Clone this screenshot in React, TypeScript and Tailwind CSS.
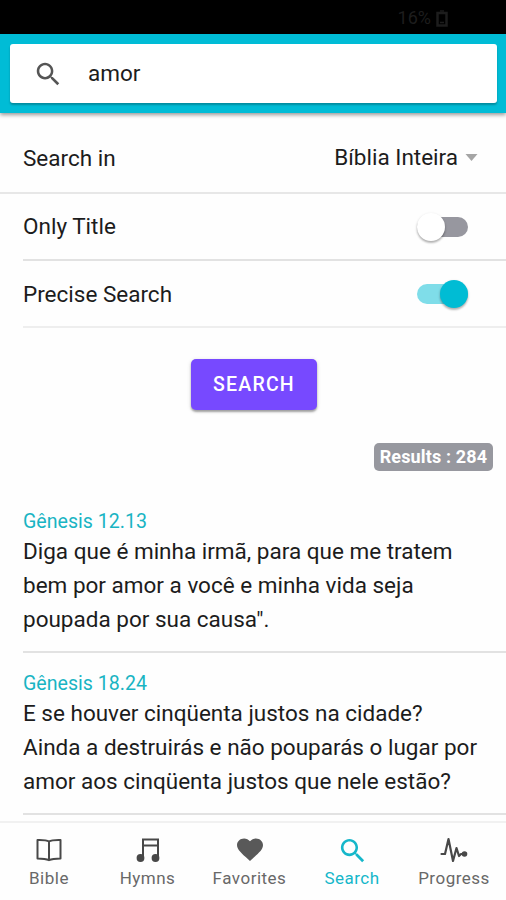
import type { ReactNode } from "react";

function Magnifier({ className }: { className: string }) {
  return (
    <svg viewBox="0 0 512 512" className={className} fill="currentColor">
      <path d="M337.509 305.372h-17.501l-6.571-5.486c20.791-25.232 33.922-57.054 33.922-93.257C347.358 127.632 283.896 64 205.135 64 127.452 64 64 127.632 64 206.629s63.452 142.628 142.225 142.628c35.011 0 67.831-13.167 92.991-34.008l6.561 5.487v17.551L415.18 448 448 415.086 337.509 305.372zm-131.284 0c-54.702 0-98.463-43.887-98.463-98.743 0-54.858 43.761-98.742 98.463-98.742 54.7 0 98.462 43.884 98.462 98.742 0 54.856-43.762 98.743-98.462 98.743z" />
    </svg>
  );
}

function Toggle({ on = false }: { on?: boolean }) {
  return (
    <div className={`relative h-[20px] w-[51px] rounded-full ${on ? "bg-[#7fdde9]" : "bg-[#97979f]"}`}>
      <div
        className={`absolute -top-[4px] size-[28px] rounded-full shadow-[0_2px_2px_rgba(0,0,0,0.22),0_1px_3px_rgba(0,0,0,0.15)] ${
          on ? "right-0 bg-[#00bcd4]" : "left-0 bg-white"
        }`}
      />
    </div>
  );
}

function Verse({ title, lines, className }: { title: string; lines: string[]; className: string }) {
  return (
    <article className={`ml-[23px] border-b-2 border-[#e2e2e2] ${className}`}>
      <h2 className="text-[19.6px] leading-[27px] text-[#19b4c3]">{title}</h2>
      <p className="text-[22.5px] leading-[33.75px] whitespace-nowrap">
        {lines.map((line) => (
          <span key={line} className="block">{line}</span>
        ))}
      </p>
    </article>
  );
}

function Tab({ label, className, children }: { label: string; className: string; children: ReactNode }) {
  return (
    <div className={`flex flex-col items-center pt-[11px] ${className}`}>
      <div className="flex h-[32px] items-center justify-center">{children}</div>
      <span className="text-[17px] leading-[24px] tracking-[0.5px]">{label}</span>
    </div>
  );
}

export default function App() {
  return (
    <div className="flex h-[900px] w-[506px] flex-col overflow-hidden bg-[#fefefe] font-[Roboto,sans-serif] text-[#1c1c1c]">
      <div className="flex h-[34px] shrink-0 items-center justify-end gap-[5px] bg-black pt-[2px] pr-[58px] text-[#1d1d1d]">
        <span className="text-[18px] leading-[20px]">16%</span>
        <svg viewBox="0 0 12 17" className="h-[17px] w-[12px]" fill="none" stroke="currentColor">
          <path d="M1.500 3h9v12.500h-9z" strokeWidth="2.500" />
          <path d="M4 1h4M4 12.500h4" strokeWidth="1.500" />
        </svg>
      </div>
      <header className="z-10 h-[79px] shrink-0 bg-[#00bcd6] px-[10px] pt-[10px] shadow-[0_2px_4px_rgba(0,0,0,0.4)]">
        <div className="flex h-[59px] w-[487px] items-center rounded-[3px] bg-white pl-[23px] shadow-[0_2px_2px_rgba(0,0,0,0.25)]">
          <Magnifier className="size-[30px] text-[#555]" />
          <span className="ml-[25px] pb-[2px] text-[22.5px] leading-[30px]">amor</span>
        </div>
      </header>
      <main className="min-h-0 flex-1 overflow-hidden text-[22.5px]">
        <div className="flex h-[81px] items-center justify-between border-b-2 border-[#e7e7e7] pt-[12px] pr-[28px] pl-[23px]">
          <span>Search in</span>
          <div className="flex items-center gap-[7px] pb-[2px]">
            <span>Bíblia Inteira</span>
            <svg viewBox="0 0 12 7" className="h-[7px] w-[13px]" fill="#a5a5a5"><path d="M0 0h12L6 7z" /></svg>
          </div>
        </div>
        <div className="ml-[23px] flex h-[67px] items-center justify-between border-b-2 border-[#e2e2e2] pr-[38px]">
          <span className="pt-px">Only Title</span>
          <Toggle />
        </div>
        <div className="ml-[23px] flex h-[67px] items-center justify-between border-b-2 border-[#eee] pr-[38px]">
          <span className="pt-[2px]">Precise Search</span>
          <Toggle on />
        </div>
        <button className="mt-[31px] ml-[191px] block h-[51px] w-[126px] rounded-[5px] bg-[#7749ff] text-[19.500px] font-medium tracking-[1.2px] text-white shadow-[0_2px_2px_rgba(0,0,0,0.3),0_1px_4px_rgba(0,0,0,0.15)]">
          SEARCH
        </button>
        <div className="mt-[33px] mr-[13px] ml-auto h-[28px] w-[119px] rounded-[5px] bg-[#97989f] text-center text-[18px] leading-[27px] font-bold tracking-[0.15px] whitespace-nowrap text-white">
          Results : 284
        </div>
        <Verse
          className="mt-[37px] h-[145px]"
          title="Gênesis 12.13"
          lines={["Diga que é minha irmã, para que me tratem", "bem por amor a você e minha vida seja", "poupada por sua causa\"."]}
        />
        <Verse
          className="h-[162px] pt-[17px]"
          title="Gênesis 18.24"
          lines={["E se houver cinqüenta justos na cidade?", "Ainda a destruirás e não pouparás o lugar por", "amor aos cinqüenta justos que nele estão?"]}
        />
      </main>
      <nav className="flex h-[79px] shrink-0 border-t-2 border-[#f1f1f1] bg-[#fefefe] text-[#686868]">
        <Tab label="Bible" className="w-[98px]">
          <svg viewBox="0 0 26 24" className="h-[24px] w-[26px]" fill="none" stroke="#484848" strokeWidth="2" strokeLinejoin="round">
            <path d="M13 3.500C10 1.700 5 2 1.500 2v18.500c4 0 8 0 11.500 1.700 3.500-1.700 7.500-1.700 11.500-1.700V2C21 2 16 1.700 13 3.500zV22" />
          </svg>
        </Tab>
        <Tab label="Hymns" className="w-[99px]">
          <svg viewBox="0 0 24 24" className="h-[24px] w-[24px]" fill="none" stroke="#484848" strokeWidth="2">
            <path d="M7 20V1.500h15V20M7 7.500h15" />
            <circle cx="4.500" cy="20" r="3.900" fill="#484848" stroke="none" />
            <circle cx="19.500" cy="20" r="3.900" fill="#484848" stroke="none" />
          </svg>
        </Tab>
        <Tab label="Favorites" className="w-[105px]">
          <svg viewBox="0 0 26 24" className="h-[24px] w-[26px]" fill="#595959">
            <path d="m13 23-1.900-1.700C4.500 15.400 0 11.700 0 7.100 0 3.400 3.100.5 7.100.5 9.400.5 11.600 1.600 13 3.300 14.400 1.600 16.600.5 18.900.5 22.900.5 26 3.400 26 7.100c0 4.600-4.500 8.300-11.100 14.200z" />
          </svg>
        </Tab>
        <Tab label="Search" className="w-[100px] text-[#15b7ca]">
          <Magnifier className="size-[31px]" />
        </Tab>
        <Tab label="Progress" className="w-[104px]">
          <svg viewBox="0 0 28 26" className="h-[26px] w-[28px]" fill="none" stroke="#484848" strokeWidth="2.200" strokeLinecap="round" strokeLinejoin="round">
            <path d="M1.500 17H5L8.500 2l4.500 22 3.500-13 2.500 8 2-2h4" />
            <circle cx="24.500" cy="17" r="2.800" fill="#484848" stroke="none" />
          </svg>
        </Tab>
      </nav>
    </div>
  );
}
